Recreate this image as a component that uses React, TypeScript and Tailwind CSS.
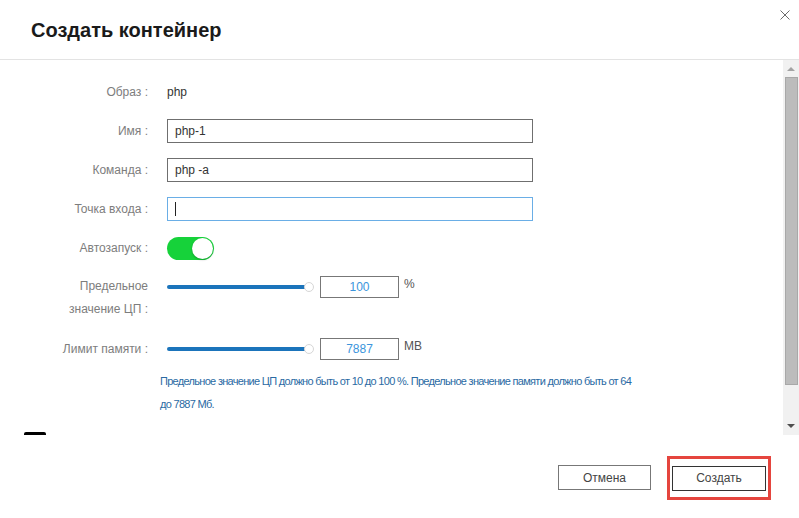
import { useState } from "react";

const Label = ({ children }: { children: React.ReactNode }) => (
  <div className="w-[148px] shrink-0 text-right text-[12px] text-[#7d7d7d] leading-[23px]">
    {children}
  </div>
);

const TextInput = ({ value, focused }: { value: string; focused?: boolean }) => (
  <div
    className={`w-[366px] h-[24px] flex items-center px-[7px] text-[12px] text-[#333] border ${
      focused ? "border-[#6aaee6]" : "border-[#6f6f6f]"
    }`}
  >
    {value}
    {focused && <span className="w-px h-[14px] bg-[#222]" />}
  </div>
);

const Slider = () => (
  <div className="relative w-[147px] h-[12px] flex items-center">
    <div className="w-[142px] h-[4px] rounded-full bg-[#1b74bb]" />
    <div className="absolute right-0 top-[1px] w-[10px] h-[10px] rounded-full bg-white border border-[#d6d6d6]" />
  </div>
);

const NumberBox = ({ value, unit }: { value: string; unit: string }) => (
  <div className="flex items-start gap-[5px]">
    <div className="w-[79px] h-[22px] border border-[#777] flex items-center justify-center text-[12px] text-[#3b95dc]">
      {value}
    </div>
    <span className="text-[12px] text-[#555] leading-[16px]">{unit}</span>
  </div>
);

export default function App() {
  const [autostart, setAutostart] = useState(true);

  return (
    <div
      className="w-[799px] h-[518px] bg-white flex flex-col overflow-hidden"
      style={{ fontFamily: '"Liberation Sans", Arial, sans-serif' }}
    >
      {/* header */}
      <div className="relative h-[60px] shrink-0 border-b border-[#e3e3e3] flex items-center pl-[31px]">
        <h1 className="text-[20px] font-bold text-[#1a1a1a]">Создать контейнер</h1>
        <button className="absolute right-[9px] top-[10px] w-[10px] h-[10px]">
          <svg viewBox="0 0 10 10" className="w-[10px] h-[10px]">
            <path d="M0.5 0.5L9.5 9.5M9.5 0.5L0.5 9.5" stroke="#6b6b6b" strokeWidth="1" />
          </svg>
        </button>
      </div>

      {/* body */}
      <div className="h-[375px] shrink-0 flex">
        <div className="flex-1 overflow-hidden pt-[20px]">
          <div className="flex flex-col gap-[15px]">
            <div className="flex items-center h-[24px] gap-[19px]">
              <Label>Образ :</Label>
              <span className="text-[12px] text-[#333]">php</span>
            </div>
            <div className="flex items-center h-[24px] gap-[19px]">
              <Label>Имя :</Label>
              <TextInput value="php-1" />
            </div>
            <div className="flex items-center h-[24px] gap-[19px]">
              <Label>Команда :</Label>
              <TextInput value="php -a" />
            </div>
            <div className="flex items-center h-[24px] gap-[19px]">
              <Label>Точка входа :</Label>
              <TextInput value="" focused />
            </div>
            <div className="flex items-center h-[24px] gap-[19px]">
              <Label>Автозапуск :</Label>
              <button
                onClick={() => setAutostart(!autostart)}
                className={`w-[47px] h-[23px] rounded-full flex items-center px-[1px] ${
                  autostart ? "bg-[#16d23a] justify-end" : "bg-[#ddd] justify-start"
                }`}
              >
                <span className="w-[21px] h-[21px] rounded-full bg-white shadow-[0_1px_2px_rgba(0,0,0,0.25)]" />
              </button>
            </div>
          </div>

          <div className="flex gap-[19px] mt-[15px]">
            <Label>
              Предельное
              <br />
              значение ЦП :
            </Label>
            <div className="flex items-center gap-[6px] h-[23px]">
              <Slider />
              <NumberBox value="100" unit="%" />
            </div>
          </div>

          <div className="flex items-center gap-[19px] mt-[17px] h-[22px]">
            <Label>Лимит памяти :</Label>
            <div className="flex items-center gap-[6px]">
              <Slider />
              <NumberBox value="7887" unit="МВ" />
            </div>
          </div>

          <p className="ml-[160px] mt-[10px] w-[520px] text-[11px] tracking-[-0.7px] leading-[23px] text-[#2a6aa3]">
            Предельное значение ЦП должно быть от 10 до 100 %. Предельное значение памяти должно быть от 64
            <br />
            до 7887 Мб.
          </p>

          <div className="ml-[24px] mt-[16px] w-[22px] h-[16px] bg-black rounded-t-[2px]" />
        </div>

        {/* scrollbar */}
        <div className="w-[16px] shrink-0 bg-[#f1f1f1] flex flex-col items-center">
          <div className="h-[17px] flex items-center">
            <svg viewBox="0 0 8 4" className="w-[8px] h-[4px]">
              <path d="M0 4L4 0L8 4Z" fill="#a3a3a3" />
            </svg>
          </div>
          <div className="w-[13px] h-[308px] bg-[#bcbcbc] border border-[#a8a8a8]" />
          <div className="flex-1 flex items-end pb-[7px]">
            <svg viewBox="0 0 8 4" className="w-[8px] h-[4px]">
              <path d="M0 0L8 0L4 4Z" fill="#4f4f4f" />
            </svg>
          </div>
        </div>
      </div>

      {/* footer */}
      <div className="flex-1 flex justify-end items-start pt-[21px] pr-[28px] gap-[16px]">
        <button className="mt-[9px] w-[93px] h-[25px] border border-[#777] text-[12px] text-[#444]">
          Отмена
        </button>
        <div className="w-[104px] h-[44px] border-[3px] border-[#e5453e] flex items-center justify-center">
          <button className="w-[94px] h-[25px] border border-[#333] text-[12px] text-[#444]">
            Создать
          </button>
        </div>
      </div>
    </div>
  );
}
